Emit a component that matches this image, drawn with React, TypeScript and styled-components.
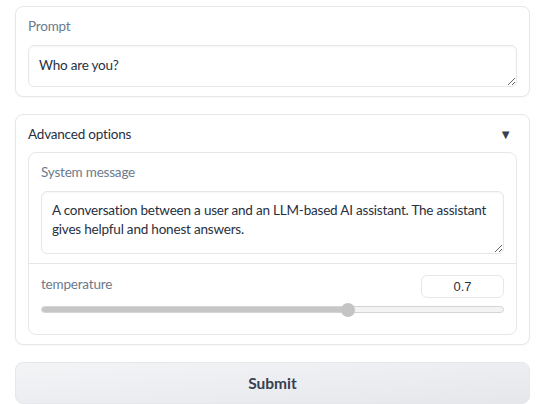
import React, { useState } from 'react'
import styled, { createGlobalStyle } from 'styled-components'

const GlobalStyle = createGlobalStyle`
  html, body {
    margin: 0;
    padding: 0;
    background: #ffffff;
  }
  body {
    font-family: 'Lato', 'Open Sans', sans-serif;
    color: #1f2937;
  }
`

const color = {
  border: '#e5e7eb',
  label: '#6b7a8c',
  text: '#27303f',
}

const Page = styled.main`
  display: flex;
  flex-direction: column;
  gap: 17px;
  padding: 6px 7px 0 15px;
`

const Card = styled.section`
  border: 1px solid ${color.border};
  border-radius: 8px;
  background: #fff;
  padding: ${props => props.$pad || '12px'};
  display: flex;
  flex-direction: column;
  box-shadow: 0 1px 2px rgba(0, 0, 0, 0.03);
`

const Label = styled.div`
  font-size: 13.5px;
  line-height: 18px;
  letter-spacing: -0.2px;
  color: ${color.label};
  height: 18px;
`

const TextArea = styled.textarea`
  display: block;
  box-sizing: border-box;
  width: 100%;
  height: ${props => props.$h}px;
  margin-top: 10px;
  border: 1px solid ${color.border};
  border-radius: 6px;
  padding: ${props => props.$pt || 10}px 10px 8px 10px;
  font-family: 'Lato', 'Open Sans', sans-serif;
  font-size: 13.5px;
  letter-spacing: -0.2px;
  line-height: 19px;
  color: ${color.text};
  background: #fff;
  box-shadow: inset 0 1px 2px rgba(0, 0, 0, 0.04);
  resize: vertical;
  outline: none;
`

const AccordionHead = styled.div`
  display: flex;
  justify-content: space-between;
  align-items: center;
  height: 18px;
  font-size: 13.5px;
  letter-spacing: -0.2px;
  color: ${color.text};
  margin-bottom: 9px;
`

const Arrow = styled.span`
  font-size: 13px;
  color: #374151;
  padding-right: 5px;
`

const Inner = styled.div`
  border: 1px solid ${color.border};
  border-radius: 8px;
  display: flex;
  flex-direction: column;
`

const Block = styled.div`
  padding: ${props => props.$pad};
  & + & {
    border-top: 1px solid ${color.border};
  }
`

const SliderHead = styled.div`
  display: flex;
  justify-content: space-between;
  align-items: flex-start;
`

const NumberBox = styled.input`
  box-sizing: border-box;
  width: 83px;
  height: 23px;
  border: 1px solid ${color.border};
  border-radius: 6px;
  text-align: center;
  font-family: 'Liberation Sans', Arial, sans-serif;
  font-size: 13px;
  color: ${color.text};
  outline: none;
`

const Track = styled.div`
  position: relative;
  margin-top: 8px;
  height: 7px;
  box-sizing: border-box;
  border: 1px solid #d4d4d4;
  border-radius: 4px;
  background: #f3f3f3;
`

const Fill = styled.div`
  height: 100%;
  border-radius: 4px;
  background: #c6c6c6;
`

const Thumb = styled.div`
  position: absolute;
  top: 50%;
  width: 14px;
  height: 14px;
  border-radius: 50%;
  background: #c4c4c4;
  transform: translate(-50%, -50%);
`

const SubmitButton = styled.button`
  height: 42px;
  border: 1px solid ${color.border};
  border-radius: 8px;
  background: linear-gradient(to bottom right, #f3f4f6, #e5e7eb);
  font-family: 'Lato', 'Open Sans', sans-serif;
  font-size: 15.5px;
  font-weight: 700;
  color: #374151;
  cursor: pointer;
`

const App = () => {
  const [temp] = useState(0.7)
  const max = 1.056
  const pct = (temp / max) * 100

  return (
    <>
      <GlobalStyle />
      <Page>
        <Card $pad="10px 12px 9px 12px">
          <Label>Prompt</Label>
          <TextArea $h={42} defaultValue="Who are you?" rows={1} />
        </Card>

        <Card $pad="10px 12px 9px 12px">
          <AccordionHead>
            <span>Advanced options</span>
            <Arrow>▼</Arrow>
          </AccordionHead>
          <Inner>
            <Block $pad="10px 12px 9px 12px">
              <Label>System message</Label>
              <TextArea
                $h={63}
                $pt={9}
                defaultValue="A conversation between a user and an LLM-based AI assistant. The assistant gives helpful and honest answers."
              />
            </Block>
            <Block $pad="11px 12px 21px 12px">
              <SliderHead>
                <Label>temperature</Label>
                <NumberBox defaultValue={temp} />
              </SliderHead>
              <Track>
                <Fill style={{ width: `${pct}%` }} />
                <Thumb style={{ left: `${pct}%` }} />
              </Track>
            </Block>
          </Inner>
        </Card>

        <SubmitButton>Submit</SubmitButton>
      </Page>
    </>
  )
}

export default App
